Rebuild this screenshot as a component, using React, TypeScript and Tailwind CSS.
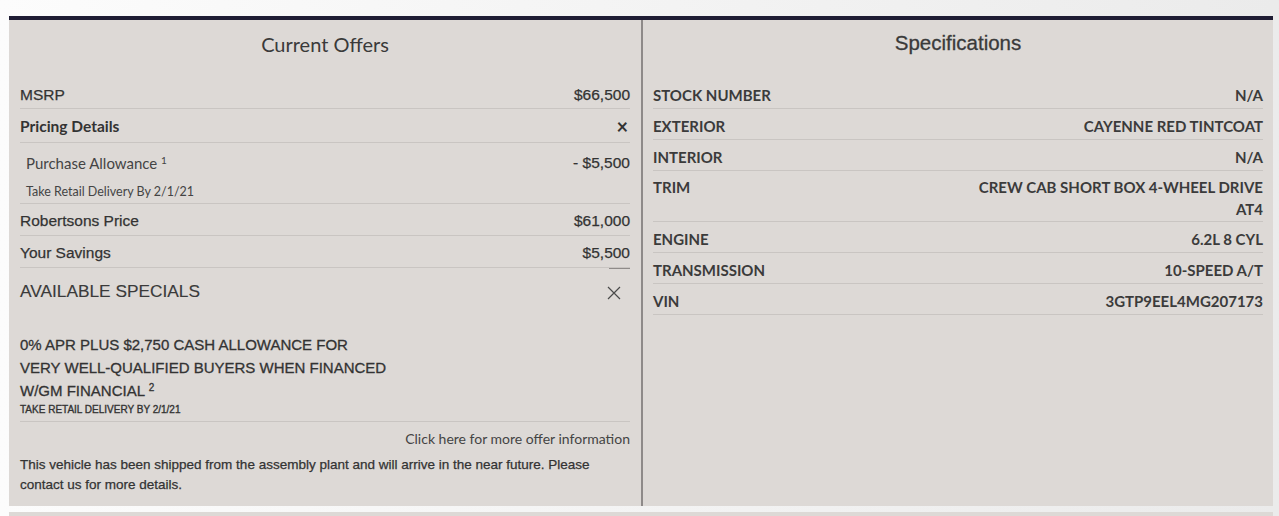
const lato = "font-['Lato','Liberation_Sans',sans-serif]"
const arial = "font-['Liberation_Sans',Arial,sans-serif]"

const specs: [string, string[]][] = [
  ["STOCK NUMBER", ["N/A"]],
  ["EXTERIOR", ["CAYENNE RED TINTCOAT"]],
  ["INTERIOR", ["N/A"]],
  ["TRIM", ["CREW CAB SHORT BOX 4-WHEEL DRIVE", "AT4"]],
  ["ENGINE", ["6.2L 8 CYL"]],
  ["TRANSMISSION", ["10-SPEED A/T"]],
  ["VIN", ["3GTP9EEL4MG207173"]],
]

function ThinX() {
  return (
    <svg width="14" height="14" viewBox="0 0 14 14" className="mt-[5px] mr-[9px]">
      <path d="M1 1 L13 13 M13 1 L1 13" stroke="#4a4a4a" strokeWidth="1.2" fill="none" />
    </svg>
  )
}

export default function App() {
  const row = "flex justify-between border-b border-[#c9c5c2]"
  return (
    <div className="w-[1279px] h-[516px] overflow-hidden bg-gradient-to-r from-[#fcfcfc] to-[#ebebeb] pt-[16px] pl-[9px] pr-[6px] text-[#333]">
      <div className="flex h-[490px] bg-[#ddd9d6] border-t-[4px] border-[#1f1d34]">
        {/* current offers */}
        <div className="w-[632px] px-[11px]">
          <div className={`h-[58px] pt-[12px] text-center text-[20px] leading-[24px] text-[#3a3a3a] ${lato}`}>Current Offers</div>
          <div className={`${row} pt-[8px] pb-[4px] text-[15.5px] leading-[18px] ${arial} [-webkit-text-stroke:0.25px]`}>
            <span>MSRP</span>
            <span>$66,500</span>
          </div>
          <div className={`${row} h-[34px] items-center text-[15.5px] leading-[18px] font-bold ${lato}`}>
            <span>Pricing Details</span>
            <span className="text-[20px] pr-[2px]">×</span>
          </div>
          <div className={`border-b border-[#c9c5c2] pl-[6px] pt-[10px] pb-[2px] ${lato}`}>
            <div className="flex justify-between text-[15px] leading-[20px] text-[#444]">
              <span>Purchase Allowance <sup className="text-[10px]">1</sup></span>
              <span className={`${arial} text-[15.5px] [-webkit-text-stroke:0.25px] text-[#333]`}>- $5,500</span>
            </div>
            <div className="mt-[10px] text-[12.5px] leading-[18px] text-[#444]">Take Retail Delivery By 2/1/21</div>
          </div>
          <div className={`${row} pt-[8px] pb-[5px] text-[15.5px] leading-[18px] ${arial} [-webkit-text-stroke:0.25px]`}>
            <span>Robertsons Price</span>
            <span>$61,000</span>
          </div>
          <div className={`${row} pt-[8px] pb-[5px] text-[15.5px] leading-[18px] ${arial} [-webkit-text-stroke:0.25px]`}>
            <span>Your Savings</span>
            <span>$5,500</span>
          </div>
          <div className="flex justify-end">
            <div className="w-[21px] h-[1px] bg-[#8f8b89]" />
          </div>
          <div className={`flex justify-between pt-[12px] ${arial}`}>
            <span className="text-[17.3px] leading-[20px] text-[#3a3a3a] [-webkit-text-stroke:0.15px]">AVAILABLE SPECIALS</span>
            <ThinX />
          </div>
          <div className={`border-b border-[#c9c5c2] mt-[32px] pb-[3px] ${arial}`}>
            <div className="text-[15px] leading-[23px] [-webkit-text-stroke:0.3px]">
              0% APR PLUS $2,750 CASH ALLOWANCE FOR<br />
              VERY WELL-QUALIFIED BUYERS WHEN FINANCED<br />
              W/GM FINANCIAL <sup className="text-[10px]">2</sup>
            </div>
            <div className="text-[10px] leading-[16px] [-webkit-text-stroke:0.35px]">TAKE RETAIL DELIVERY BY 2/1/21</div>
          </div>
          <div className={`pt-[8px] text-right text-[14px] leading-[18px] text-[#444] ${lato}`}>Click here for more offer information</div>
          <p className={`mt-[7px] text-[13.5px] leading-[20px] ${arial} [-webkit-text-stroke:0.25px]`}>
            This vehicle has been shipped from the assembly plant and will arrive in the near future. Please<br />
            contact us for more details.
          </p>
        </div>
        <div className="w-[2px] bg-[#8e8a89]" />
        {/* specifications */}
        <div className="flex-1 px-[10px]">
          <div className={`h-[58px] pt-[11px] text-center text-[20.5px] leading-[24px] text-[#3a3a3a] ${arial} [-webkit-text-stroke:0.3px]`}>Specifications</div>
          {specs.map(([k, v]) => (
            <div key={k} className={`${row} text-[15px] font-bold text-[#3b3b3b] ${lato} ${v.length > 1 ? "pt-[5px] pb-[1px] leading-[22px]" : "pt-[8px] pb-[4px] leading-[18px]"}`}>
              <span>{k}</span>
              <span className="text-right">
                {v.map((l) => (
                  <div key={l}>{l}</div>
                ))}
              </span>
            </div>
          ))}
        </div>
      </div>
      <div className="mt-[6px] h-[20px] bg-[#ddd9d6]" />
    </div>
  )
}
